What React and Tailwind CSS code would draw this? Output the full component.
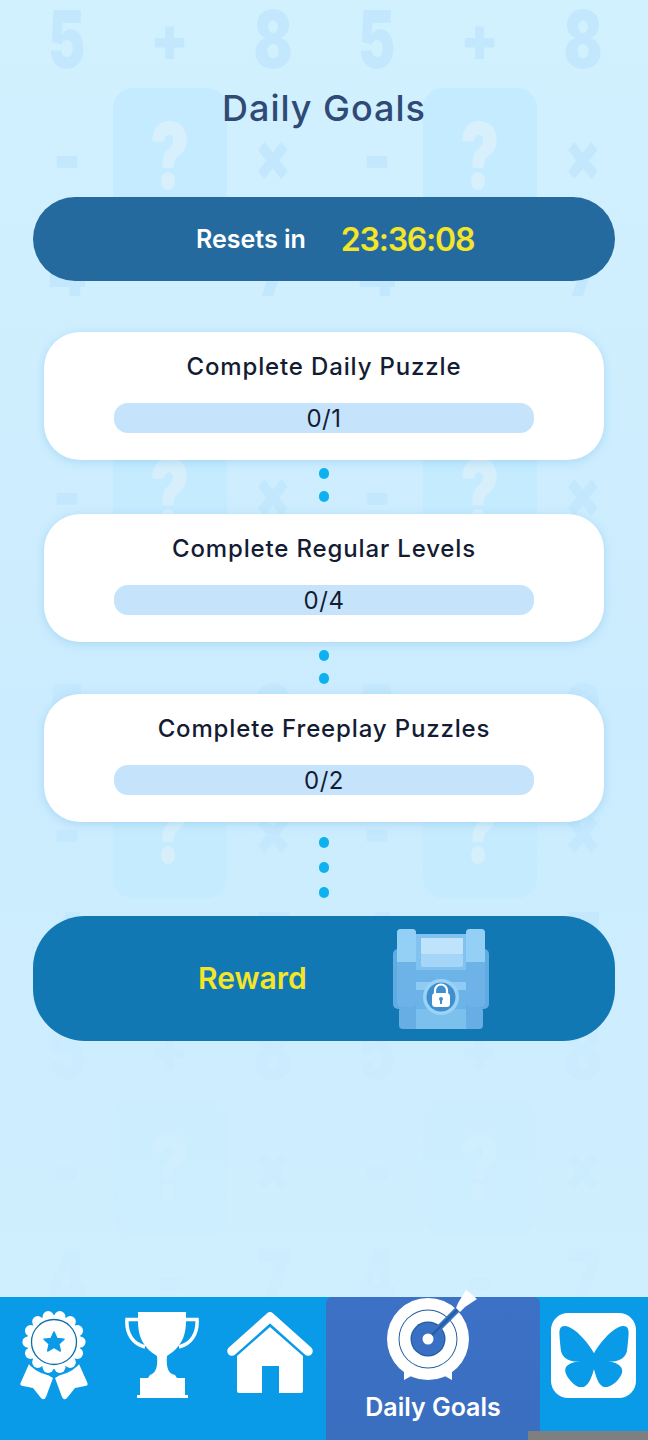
import React from 'react';

const font = { fontFamily: 'Inter, "Noto Sans", sans-serif' };

const goals = [
  { title: 'Complete Daily Puzzle', progress: '0/1', count: 2, dotsClass: 'gap-[12px] pt-[8px] pb-[12px]' },
  { title: 'Complete Regular Levels', progress: '0/4', count: 2, dotsClass: 'gap-[12px] pt-[8px] pb-[10px]' },
  { title: 'Complete Freeplay Puzzles', progress: '0/2', count: 3, dotsClass: 'gap-[14px] pt-[15px] pb-[18px]' },
];

const tileOpacity = [1, 0.95, 0.85, 0.2];

const glyphStyles = {
  '5': 'text-[80px] scale-x-[0.7]',
  '8': 'text-[80px] scale-x-[0.72]',
  '4': 'text-[80px] scale-x-[0.7]',
  '7': 'text-[80px] scale-x-[0.7]',
  '+': 'text-[62px] scale-x-[0.9]',
  '-': 'text-[80px] scale-x-[0.75]',
  '×': 'text-[66px] scale-x-[0.8]',
};

const Glyph = ({ children }) => (
  <span aria-hidden="true" className={`block font-black leading-none text-[#c3e8fd] ${glyphStyles[children]}`}>{children}</span>
);

const QuestionCard = () => (
  <div className="w-[114px] h-[136px] shrink-0 rounded-[20px] bg-[#c4ebff] flex items-center justify-center">
    <span aria-hidden="true" className="block font-black text-[92px] leading-none text-[#d8f0fb] scale-x-[0.72]">?</span>
  </div>
);

const Cell = ({ children }) => (
  <div className="flex items-center justify-center">{children}</div>
);

// faded numbers behind the page
const Backdrop = () => (
  <div className="absolute inset-0 overflow-hidden">
    <div className="ml-[15px] -mt-[19px] flex flex-col">
      {tileOpacity.map((opacity, t) => (
        <div key={t} className="grid grid-cols-[repeat(6,103.33px)] grid-rows-[116px_118px_103px]" style={{ opacity }}>
          {['5', '+', '8', '5', '+', '8'].map((c, i) => <Cell key={i}><Glyph>{c}</Glyph></Cell>)}
          {['-', 'q', '×', '-', 'q', '×'].map((c, i) => (
            <Cell key={i}>{c === 'q' ? <QuestionCard /> : <Glyph>{c}</Glyph>}</Cell>
          ))}
          {['4', '-', '7', '4', '-', '7'].map((c, i) => <Cell key={i}><Glyph>{c}</Glyph></Cell>)}
        </div>
      ))}
    </div>
  </div>
);

const Dots = ({ count, className }) => (
  <div className={`flex flex-col items-center ${className}`}>
    {Array.from({ length: count }).map((_, i) => (
      <span key={i} className="w-[10px] h-[11px] rounded-full bg-[#0db1ee]" />
    ))}
  </div>
);

const GoalCard = ({ title, progress }) => (
  <div className="mx-[44px] h-[128px] rounded-[36px] bg-white shadow-[0_2px_10px_rgba(90,170,225,0.3)] flex flex-col items-center pt-[18px]">
    <h3 className="text-[24px] leading-[34px] font-[450] text-[#141c33] tracking-[0.85px]">{title}</h3>
    <div className="mt-[19px] w-[420px] h-[30px] rounded-[14px] bg-[#c5e4fc] flex items-center justify-center pt-[1px] text-[24px] tracking-[0.5px] text-[#141c33]">
      {progress}
    </div>
  </div>
);

const ChestIcon = () => (
  <svg width="96" height="100" viewBox="0 0 96 100" className="shrink-0">
    <rect x="0" y="20" width="96" height="60" rx="5" fill="#5fabe2" />
    <rect x="6" y="78" width="84" height="22" rx="4" fill="#66aee3" />
    <rect x="23" y="78" width="50" height="22" fill="#7cc0ee" />
    <rect x="23" y="5" width="50" height="75" fill="#6cb4e8" />
    <rect x="23" y="5" width="50" height="36" fill="#82c2f0" />
    <rect x="28" y="9" width="42" height="16" fill="#bfe3fa" />
    <rect x="28" y="25" width="42" height="13" rx="2" fill="#a5d6f7" />
    <rect x="23" y="53" width="50" height="8" fill="#8fcbf2" />
    <rect x="4" y="0" width="19" height="78" rx="4" fill="#6db3e7" />
    <path d="M4 33V4a4 4 0 0 1 4-4h11a4 4 0 0 1 4 4v29Z" fill="#94cff5" />
    <rect x="73" y="0" width="19" height="78" rx="4" fill="#6db3e7" />
    <path d="M73 33V4a4 4 0 0 1 4-4h11a4 4 0 0 1 4 4v29Z" fill="#94cff5" />
    <circle cx="48" cy="68" r="18" fill="#9ad3f6" />
    <circle cx="48" cy="68" r="14.5" fill="#3f8fcf" />
    <path d="M42 65v-3.5a6 6 0 0 1 12 0V65" fill="none" stroke="#fff" strokeWidth="2.2" />
    <rect x="39" y="64" width="18" height="14" rx="3.5" fill="#fff" />
    <circle cx="48" cy="70" r="2" fill="#3f8fcf" />
    <rect x="47" y="70" width="2" height="5" fill="#3f8fcf" />
  </svg>
);

const scallops = Array.from({ length: 14 }).map((_, i) => {
  const a = (i / 14) * Math.PI * 2;
  return [Math.cos(a) * 26, Math.sin(a) * 26];
});

const RosetteIcon = () => (
  <svg width="68" height="90" viewBox="0 0 68 90" className="shrink-0">
    <path d="M9 54 L1 72 Q-1 76 3 76 L13 78 L21 88 Q24 91 26 87 L33 68 Z" fill="#fff" />
    <path d="M59 54 L67 72 Q69 76 65 76 L55 78 L47 88 Q44 91 42 87 L35 68 Z" fill="#fff" />
    <g transform="translate(34 32)">
      <circle r="33.5" fill="#0a9be8" />
      <circle r="27" fill="#fff" />
      {scallops.map(([x, y], i) => <circle key={i} cx={x} cy={y} r="5.6" fill="#fff" />)}
      <circle r="22.5" fill="none" stroke="#0b6fae" strokeWidth="1.3" />
      <path d="M0 -10 L3 -3.5 L10 -2.8 L4.8 2 L6.3 9 L0 5.4 L-6.3 9 L-4.8 2 L-10 -2.8 L-3 -3.5 Z" fill="#0a9be8" stroke="#0a9be8" strokeWidth="1.5" strokeLinejoin="round" />
    </g>
  </svg>
);

const TrophyIcon = () => (
  <svg width="74" height="86" viewBox="0 0 74 86" className="shrink-0">
    <path d="M14 7.5 H2 C1 22 8 32 20 35" fill="none" stroke="#fff" strokeWidth="3.5" />
    <path d="M60 7.5 H72 C73 22 66 32 54 35" fill="none" stroke="#fff" strokeWidth="3.5" />
    <path d="M13 0 H61 V8 C61 22 58 34 42 44 C41 54 43 60 47 62 L50 63 L52 66 H60 V83 H63 V86 H12 V83 H15 V66 H23 L25 63 L27 62 C31 60 33 54 32 44 C16 34 13 22 13 8 Z" fill="#fff" />
  </svg>
);

const HomeIcon = () => (
  <svg width="88" height="84" viewBox="0 0 88 84" className="shrink-0">
    <path d="M6 40 L44 6 L82 40" fill="none" stroke="#fff" strokeWidth="9.5" strokeLinecap="round" strokeLinejoin="round" />
    <path d="M44 16 L77 45 V80 Q77 82 75 82 H53 V55 H36 V82 H13 Q11 82 11 80 V45 Z" fill="#fff" />
  </svg>
);

const TargetIcon = () => (
  <svg width="82" height="84" viewBox="0 0 82 84" className="shrink-0 overflow-visible">
    <path d="M17 72 L17 84 L28 78 Z M65 72 L65 84 L54 78 Z" fill="#fff" />
    <circle cx="41" cy="43" r="41" fill="#fff" />
    <circle cx="41" cy="43" r="29.5" fill="#1f5f9e" />
    <circle cx="41" cy="43" r="28.5" fill="#fff" />
    <circle cx="41" cy="43" r="17.5" fill="#1f5f9e" />
    <circle cx="41" cy="43" r="16.3" fill="#3a70c4" />
    <path d="M41 43 L76 8" stroke="#3a70c4" strokeWidth="6" />
    <path d="M41 43 L76 8" stroke="#1f5f9e" strokeWidth="2" />
    <circle cx="41" cy="43" r="5.5" fill="#fff" />
    <path d="M71 7 L79 -6 L83 -3 L90 3 L78 11 L73 16 L69 12 Z" fill="#fff" />
  </svg>
);

const BlueskyIcon = () => (
  <div className="w-[85px] h-[85px] rounded-[17px] bg-white flex items-center justify-center shrink-0">
    <svg width="70" height="62" viewBox="0 0 24 21.5" fill="#0a9be8">
      <path d="M12 9.8C10.9 7.7 7.95 3.75 5.2 1.8 2.57-.05 1.56.27.9.56.14.9 0 2.08 0 2.77c0 .69.38 5.65.62 6.48.82 2.73 3.71 3.66 6.38 3.36.14-.02.28-.04.42-.06-.14.02-.28.04-.42.06-3.91.58-7.39 2-2.83 7.08 5.01 5.19 6.87-1.11 7.83-4.31.95 3.2 2.05 9.27 7.73 4.31 4.27-4.31 1.17-6.5-2.74-7.08a8.7 8.7 0 0 1-.42-.06c.14.02.28.04.42.06 2.67.3 5.57-.63 6.38-3.36.25-.83.63-5.79.63-6.48 0-.69-.14-1.86-.9-2.21-.66-.3-1.67-.62-4.3 1.24C16.05 3.75 13.09 7.69 12 9.8Z" />
    </svg>
  </div>
);

const BottomNav = () => (
  <nav className="absolute bottom-0 inset-x-0 h-[143px] bg-[#0a9be8]">
    <div className="flex h-full items-start">
      <div className="w-[106px] flex justify-center pt-[13px] pl-[1px]"><RosetteIcon /></div>
      <div className="w-[112px] flex justify-center pt-[15px]"><TrophyIcon /></div>
      <div className="w-[108px] flex justify-center pt-[14px] pr-[4px]"><HomeIcon /></div>
      <div className="w-[214px] h-full rounded-t-[6px] bg-gradient-to-b from-[#3c71c6] to-[#3a6ebf] flex flex-col items-center">
        <div className="-mt-[1px] pr-[11px]"><TargetIcon /></div>
        <span className="mt-[11px] text-[25px] leading-[32px] font-semibold text-white">Daily Goals</span>
      </div>
      <div className="flex-1 h-full flex flex-col justify-between">
        <div className="pt-[16px] pl-[11px]"><BlueskyIcon /></div>
        <div className="h-[9px] -ml-[12px] bg-[#7f7f7f]" />
      </div>
    </div>
  </nav>
);

const App = () => (
  <div className="relative w-[648px] h-[1440px] overflow-hidden bg-gradient-to-b from-[#d2f1ff] via-[#cbecfe] to-[#d0f0ff]" style={font}>
    <Backdrop />
    <main className="relative flex flex-col">
      <h1 className="pt-[84px] text-center text-[36px] leading-[48px] font-medium text-[#2f4a75] tracking-[1px]">Daily Goals</h1>
      <div className="mt-[65px] mx-[33px] h-[84px] rounded-full bg-[#256a9f] flex items-center pt-[2px]">
        <span className="ml-[163px] text-[25px] font-semibold text-white">Resets in</span>
        <span className="ml-[35px] text-[32px] font-semibold tracking-[-1.2px] text-[#f3e52a]">23:36:08</span>
      </div>
      <div className="mt-[51px] flex flex-col">
        {goals.map((goal) => (
          <div key={goal.title}>
            <GoalCard title={goal.title} progress={goal.progress} />
            <Dots count={goal.count} className={goal.dotsClass} />
          </div>
        ))}
      </div>
      <div className="mx-[33px] h-[125px] rounded-[52px] bg-[#1278b4] flex items-center">
        <span className="ml-[165px] text-[30px] font-semibold text-[#f3e52a]">Reward</span>
        <div className="ml-[86px]"><ChestIcon /></div>
      </div>
    </main>
    <BottomNav />
  </div>
);

export default App;
